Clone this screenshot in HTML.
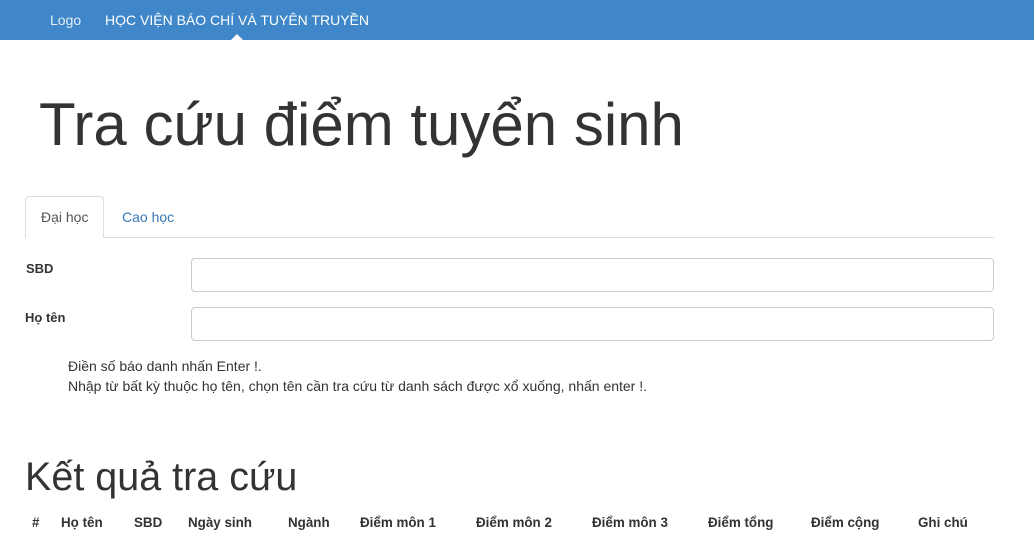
<!DOCTYPE html>
<html><head><meta charset="utf-8"><style>
body{margin:0;width:1034px;height:536px;overflow:hidden;background:#fff;font-family:"Liberation Sans",sans-serif;color:#333;position:relative;font-size:14px}
.nav{position:absolute;left:0;top:0;width:1034px;height:40px;background:#3f87c8}
.nav span{position:absolute;top:12px;font-size:14px;color:#fff}
.caret{position:absolute;left:231px;top:34px;width:0;height:0;border-left:6px solid transparent;border-right:6px solid transparent;border-bottom:6px solid #fff}
.a{position:absolute;white-space:nowrap}
.tab{position:absolute;left:25px;top:196px;width:79px;height:42px;border:1px solid #ddd;border-bottom:none;border-radius:4px 4px 0 0;background:#fff;box-sizing:border-box}
.line{position:absolute;left:25px;top:237px;width:969px;height:1px;background:#ddd}
.inp{position:absolute;left:191px;width:803px;height:34px;border:1px solid #ccc;border-radius:4px;box-sizing:border-box}
.h{position:absolute;top:515px;font-weight:bold;font-size:13.4px}
</style></head><body>
<div class="nav"><span style="left:50px;color:#e4eef8">Logo</span><span style="left:105px">HỌC VIỆN BÁO CHÍ VÀ TUYÊN TRUYỀN</span><div class="caret"></div></div>
<div class="a" style="left:39px;top:90px;font-size:60px;color:#333">Tra cứu điểm tuyển sinh</div>
<div class="line"></div>
<div class="tab"></div>
<div class="a" style="left:41px;top:209px;color:#555">Đại học</div>
<div class="a" style="left:122px;top:209px;color:#3a78b5">Cao học</div>
<div class="a" style="left:26px;top:261px;font-weight:bold;font-size:13px">SBD</div>
<div class="inp" style="top:258px"></div>
<div class="a" style="left:25px;top:310px;font-weight:bold;font-size:13px">Họ tên</div>
<div class="inp" style="top:307px"></div>
<div class="a" style="left:68px;top:358px;font-size:14px">Điền số báo danh nhấn Enter !.</div>
<div class="a" style="left:68px;top:378px;font-size:14px">Nhập từ bất kỳ thuộc họ tên, chọn tên cần tra cứu từ danh sách được xổ xuống, nhấn enter !.</div>
<div class="a" style="left:25px;top:455px;font-size:39.5px">Kết quả tra cứu</div>
<div class="h" style="left:32px">#</div>
<div class="h" style="left:61px">Họ tên</div>
<div class="h" style="left:134px">SBD</div>
<div class="h" style="left:188px">Ngày sinh</div>
<div class="h" style="left:288px">Ngành</div>
<div class="h" style="left:360px">Điểm môn 1</div>
<div class="h" style="left:476px">Điểm môn 2</div>
<div class="h" style="left:592px">Điểm môn 3</div>
<div class="h" style="left:708px">Điểm tổng</div>
<div class="h" style="left:811px">Điểm cộng</div>
<div class="h" style="left:918px">Ghi chú</div>
</body></html>
